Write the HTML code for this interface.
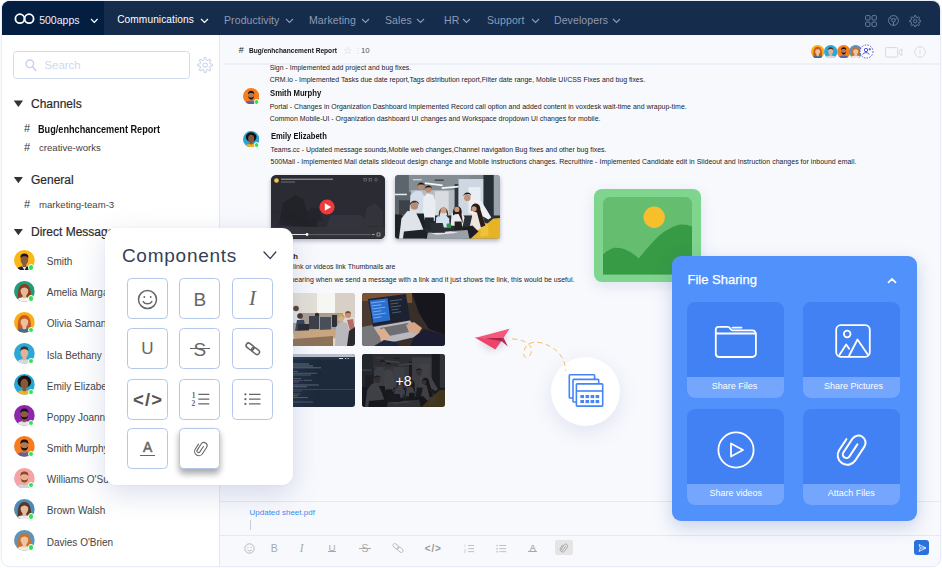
<!DOCTYPE html>
<html lang="en">
<head>
<meta charset="utf-8">
<title>500apps - Communications</title>
<style>
*{box-sizing:border-box;margin:0;padding:0}
html,body{width:942px;height:568px;overflow:hidden;background:#fff;font-family:"Liberation Sans",sans-serif;color:#333}
.abs,.abs *{position:absolute}
.win{left:2px;top:1px;width:938px;height:565px;border-radius:8px;background:#f8f9fd;overflow:hidden;box-shadow:0 0 0 1.300px #e9edf9}
.topbar{left:0;top:0;width:938px;height:34.300px;background:#152c4c}
.brand{left:0;top:0;width:102px;height:34.300px;background:#031e41}
.t{white-space:nowrap;line-height:1}
.nav{font-size:10.500px;color:#8d9bb5;top:13.900px;letter-spacing:.1px}
.nav.on{color:#fff}
.sidebar{left:0;top:34px;width:218px;height:531px;background:#fff;border-right:1px solid #e3e8f5}
.search{left:11px;top:16.300px;width:177px;height:27.500px;border:1.200px solid #d2dbee;border-radius:3.500px;background:#fff}
.sec{font-size:12px;color:#2b2b2b;left:29px;margin-top:1px;-webkit-text-stroke:.2px #2b2b2b}
.tri{left:11.700px;width:9.400px;height:6.500px;background:#333;clip-path:polygon(0 0,100% 0,50% 100%);margin-top:.400px}
.hash{font-size:11px;color:#333;left:22px}
.ch{font-size:9.6px;color:#444;left:37px}
.ch.b{font-weight:bold;color:#111;left:36px;font-size:10.300px;transform:scaleX(.888);transform-origin:0 50%;margin-top:.8px}
.av{width:20px;height:20px;border-radius:50%;left:12px;overflow:visible}
.av i{left:14px;top:14px;width:6px;height:6px;border-radius:50%;background:#2ee350;border:.5px solid #fff}
.av b{left:6.5px;top:3.5px;width:7px;height:8px;border-radius:50%}
.av u{left:3.5px;top:12px;width:13px;height:8px;border-radius:6px 6px 4px 4px}
.un{font-size:10.4px;color:#3c3c3c;left:45px}
.main{left:218px;top:34px;width:720px;height:531px;background:#f8f9fd}
.mhead{left:3px;top:0;width:717px;height:30px;border-bottom:2px solid #ebeff8}
.msg{font-size:7.3px;color:#222;left:50px}
.nm{font-size:8.6px;font-weight:bold;color:#111;left:50px}

.dot{width:6.400px;height:6.400px;border-radius:50%;background:#2ee350;border:.6px solid #fff}
.un2{font-size:10px;color:#444}
.pg{left:-2px;top:-1px;width:942px;height:568px}
.m{font-size:6.950px;color:#222;left:269.700px}
.n{font-weight:bold;color:#111;left:270px}
.thumb{border-radius:3px;overflow:hidden;box-shadow:0 2px 4px rgba(40,50,80,.35)}
.panel{background:#fff;border-radius:11px;box-shadow:0 9px 28px rgba(90,110,170,.22),0 0 3px rgba(90,110,170,.08)}
.cb{width:41px;height:41px;border:1px solid #b4c7ea;border-radius:4.5px;background:#fff}
.fs{background:#5191fb;border-radius:9px;box-shadow:0 6px 18px rgba(60,90,170,.25)}
.tile{width:97px;height:96px;border-radius:8px;background:#4281f4;overflow:hidden}
.tile .lb{left:0;top:75px;width:97px;height:21px;background:#74a6fd;color:#fff;font-size:9px;text-align:center;line-height:19.400px;white-space:nowrap}
</style>
</head>
<body>
<div class="abs win">
  <!-- TOP BAR -->
  <div class="topbar">
    <div class="brand">
      <svg style="left:12px;top:11px" width="21" height="13" viewBox="0 0 21 13"><circle cx="5.900" cy="6.700" r="4.500" fill="none" stroke="#fff" stroke-width="1.800"/><circle cx="15.100" cy="6.700" r="4.500" fill="none" stroke="#fff" stroke-width="1.800"/></svg>
      <div class="t" style="left:37.200px;top:13.900px;font-size:10.500px;color:#eef1f6">500apps</div>
      <svg style="left:87.500px;top:17px" width="9" height="6" viewBox="0 0 9 6"><path d="M1 1l3.300 3.400L7.600 1" fill="none" stroke="#fff" stroke-width="1.250"/></svg>
    </div>
    <div class="t nav on" style="left:115.200px;font-size:10.150px">Communications</div>
    <svg style="left:198px;top:16.600px" width="9" height="6" viewBox="0 0 9 6"><path d="M1 1l3.5 3.5L8 1" fill="none" stroke="#fff" stroke-width="1.2"/></svg>
    <div class="t nav" style="left:222px">Productivity</div>
    <svg style="left:283px;top:16.600px" width="9" height="6" viewBox="0 0 9 6"><path d="M1 1l3.5 3.5L8 1" fill="none" stroke="#8d9bb5" stroke-width="1.1"/></svg>
    <div class="t nav" style="left:307px">Marketing</div>
    <svg style="left:359px;top:16.600px" width="9" height="6" viewBox="0 0 9 6"><path d="M1 1l3.5 3.5L8 1" fill="none" stroke="#8d9bb5" stroke-width="1.1"/></svg>
    <div class="t nav" style="left:383px">Sales</div>
    <svg style="left:414px;top:16.600px" width="9" height="6" viewBox="0 0 9 6"><path d="M1 1l3.5 3.5L8 1" fill="none" stroke="#8d9bb5" stroke-width="1.1"/></svg>
    <div class="t nav" style="left:442px">HR</div>
    <svg style="left:460px;top:16.600px" width="9" height="6" viewBox="0 0 9 6"><path d="M1 1l3.5 3.5L8 1" fill="none" stroke="#8d9bb5" stroke-width="1.1"/></svg>
    <div class="t nav" style="left:485px">Support</div>
    <svg style="left:529px;top:16.600px" width="9" height="6" viewBox="0 0 9 6"><path d="M1 1l3.5 3.5L8 1" fill="none" stroke="#8d9bb5" stroke-width="1.1"/></svg>
    <div class="t nav" style="left:552px">Developers</div>
    <svg style="left:610px;top:16.600px" width="9" height="6" viewBox="0 0 9 6"><path d="M1 1l3.5 3.5L8 1" fill="none" stroke="#8d9bb5" stroke-width="1.1"/></svg>
    <!-- right icons -->
    <svg style="left:863px;top:14.200px" width="12" height="12" viewBox="0 0 12 12" fill="none" stroke="#7486a6" stroke-width=".9"><rect x=".6" y=".6" width="4.4" height="4.4" rx="1"/><rect x="7" y=".6" width="4.4" height="4.4" rx="1"/><rect x=".6" y="7" width="4.4" height="4.4" rx="1"/><rect x="7" y="7" width="4.4" height="4.4" rx="1"/></svg>
    <svg style="left:886px;top:14.200px" width="11" height="11" viewBox="0 0 11 11" fill="none" stroke="#7486a6" stroke-width=".9"><circle cx="5.5" cy="5.5" r="4.9"/><circle cx="5.5" cy="5.2" r="1.7"/><path d="M5.5 7v3.3M3.9 4.6L2 2.6M7.1 4.6l2-2"/></svg>
    <svg style="left:907px;top:13.700px" width="12.400" height="12.400" viewBox="0 0 24 24" fill="none" stroke="#7486a6" stroke-width="1.700" stroke-linejoin="round"><circle cx="12" cy="12" r="3.300"/><path d="M9.88 4.70 L10.88 1.06 L13.12 1.06 L14.12 4.70 L15.66 5.34 L18.94 3.47 L20.53 5.06 L18.66 8.34 L19.30 9.88 L22.94 10.88 L22.94 13.12 L19.30 14.12 L18.66 15.66 L20.53 18.94 L18.94 20.53 L15.66 18.66 L14.12 19.30 L13.12 22.94 L10.88 22.94 L9.88 19.30 L8.34 18.66 L5.06 20.53 L3.47 18.94 L5.34 15.66 L4.70 14.12 L1.06 13.12 L1.06 10.88 L4.70 9.88 L5.34 8.34 L3.47 5.06 L5.06 3.47 L8.34 5.34Z"/></svg>
  </div>

  <!-- SIDEBAR -->
  <div class="sidebar" id="sidebar">
    <div class="search">
      <svg style="left:10.500px;top:6.500px" width="12" height="13" viewBox="0 0 12 13" fill="none" stroke="#c5d3ec" stroke-width="1.400"><circle cx="4.8" cy="4.8" r="3.8"/><path d="M7.6 7.8l3.6 4.2"/></svg>
      <div class="t" style="left:30.500px;top:7.700px;font-size:11.400px;color:#cdd8ee">Search</div>
    </div>
    <svg style="left:195.300px;top:21.900px" width="16.200" height="16.200" viewBox="0 0 24 24" fill="none" stroke="#cbd4e8" stroke-width="1.600" stroke-linejoin="round"><circle cx="12" cy="12" r="3.200"/><path d="M9.88 4.70 L10.88 1.06 L13.12 1.06 L14.12 4.70 L15.66 5.34 L18.94 3.47 L20.53 5.06 L18.66 8.34 L19.30 9.88 L22.94 10.88 L22.94 13.12 L19.30 14.12 L18.66 15.66 L20.53 18.94 L18.94 20.53 L15.66 18.66 L14.12 19.30 L13.12 22.94 L10.88 22.94 L9.88 19.30 L8.34 18.66 L5.06 20.53 L3.47 18.94 L5.34 15.66 L4.70 14.12 L1.06 13.12 L1.06 10.88 L4.70 9.88 L5.34 8.34 L3.47 5.06 L5.06 3.47 L8.34 5.34Z"/></svg>
    <div class="tri" style="top:65px"></div><div class="t sec" style="top:61.5px">Channels</div>
    <div class="t hash" style="top:88px">#</div><div class="t ch b" style="top:89.5px">Bug/enhchancement Report</div>
    <div class="t hash" style="top:107px">#</div><div class="t ch" style="top:108px">creative-works</div>
    <div class="tri" style="top:141.300px"></div><div class="t sec" style="top:137.800px">General</div>
    <div class="t hash" style="top:164.400px">#</div><div class="t ch" style="top:164.5px">marketing-team-3</div>
    <div class="tri" style="top:193.400px"></div><div class="t sec" style="top:189.900px">Direct Messages</div>
  </div>

  <!-- MAIN -->
  <div class="main" id="main">
    <div class="mhead" id="mhead"></div>
  </div>

  <div class="pg" id="pg">
    <!-- sidebar users (page coords) -->
    <svg width="20.8" height="20.8" viewBox="0 0 20 20" style="left:13.800px;top:249.7px"><clipPath id="cs0"><circle cx="10" cy="10" r="10"/></clipPath><g clip-path="url(#cs0)"><rect width="20" height="20" fill="#fbb716"/><path d="M1.500 22c.3-4.500 3.200-6.300 8.500-6.300s8.200 1.800 8.500 6.300z" fill="#1b2236"/><path d="M7.800 15.700l2.200 3.800 2.200-3.800z" fill="#f4f4f4"/><rect x="8.200" y="12.500" width="3.600" height="4.200" rx="1.300" fill="#8a5a3c"/><ellipse cx="10" cy="9.300" rx="3.700" ry="4.700" fill="#8a5a3c"/><path d="M6.200 8C5.800 4.600 7.600 3.300 10 3.300s4.200 1.300 3.800 4.700C13.100 6.500 11.700 6 10 6s-3.100.5-3.800 2z" fill="#1e1512"/></g></svg><div class="dot" style="left:28px;top:264.3px"></div><div class="t un2" style="left:46.800px;top:257.1px">Smith</div>
    <svg width="20.8" height="20.8" viewBox="0 0 20 20" style="left:13.800px;top:280.8px"><clipPath id="cs1"><circle cx="10" cy="10" r="10"/></clipPath><g clip-path="url(#cs1)"><rect width="20" height="20" fill="#1f9b7d"/><path d="M3.800 19.500C3 12 3.600 2.800 10 2.800s7 9.200 6.200 16.700z" fill="#8a3f22"/><path d="M1.500 22c.3-4.500 3.200-6.300 8.500-6.300s8.200 1.800 8.500 6.300z" fill="#f3f3f3"/><rect x="8.200" y="12.500" width="3.600" height="4.200" rx="1.300" fill="#e7b99a"/><ellipse cx="10" cy="9.300" rx="3.700" ry="4.700" fill="#e7b99a"/><path d="M5.900 9C5.600 5 7.300 3.400 10 3.400s4.400 1.600 4.100 5.600C13.100 7 11.600 6.200 10 6.200S6.900 7 5.900 9z" fill="#8a3f22"/></g></svg><div class="dot" style="left:28px;top:295.4px"></div><div class="t un2" style="left:46.800px;top:288.2px">Amelia Margaret</div>
    <svg width="20.8" height="20.8" viewBox="0 0 20 20" style="left:13.800px;top:311.9px"><clipPath id="cs2"><circle cx="10" cy="10" r="10"/></clipPath><g clip-path="url(#cs2)"><rect width="20" height="20" fill="#f9ae17"/><path d="M3.800 19.500C3 12 3.600 2.800 10 2.800s7 9.200 6.200 16.700z" fill="#c85a24"/><path d="M1.500 22c.3-4.500 3.200-6.300 8.500-6.300s8.200 1.800 8.500 6.300z" fill="#3f6f8f"/><rect x="8.200" y="12.500" width="3.600" height="4.200" rx="1.300" fill="#edc0a2"/><ellipse cx="10" cy="9.300" rx="3.700" ry="4.700" fill="#edc0a2"/><path d="M5.900 9C5.600 5 7.300 3.400 10 3.400s4.400 1.600 4.100 5.600C13.100 7 11.600 6.200 10 6.200S6.900 7 5.900 9z" fill="#c85a24"/></g></svg><div class="dot" style="left:28px;top:326.5px"></div><div class="t un2" style="left:46.800px;top:319.3px">Olivia Samantha</div>
    <svg width="20.8" height="20.8" viewBox="0 0 20 20" style="left:13.800px;top:343.1px"><clipPath id="cs3"><circle cx="10" cy="10" r="10"/></clipPath><g clip-path="url(#cs3)"><rect width="20" height="20" fill="#2ba8d6"/><path d="M1.500 22c.3-4.500 3.200-6.300 8.500-6.300s8.200 1.800 8.500 6.300z" fill="#d9d9dc"/><rect x="8.200" y="12.500" width="3.600" height="4.200" rx="1.300" fill="#e2b294"/><ellipse cx="10" cy="9.300" rx="3.700" ry="4.700" fill="#e2b294"/><path d="M6.200 8C5.800 4.600 7.600 3.300 10 3.300s4.200 1.300 3.800 4.700C13.100 6.500 11.700 6 10 6s-3.100.5-3.800 2z" fill="#4a3024"/></g></svg><div class="dot" style="left:28px;top:357.7px"></div><div class="t un2" style="left:46.800px;top:350.5px">Isla Bethany</div>
    <svg width="20.8" height="20.8" viewBox="0 0 20 20" style="left:13.800px;top:374.2px"><clipPath id="cs4"><circle cx="10" cy="10" r="10"/></clipPath><g clip-path="url(#cs4)"><rect width="20" height="20" fill="#26a6d8"/><ellipse cx="10" cy="7.400" rx="6.600" ry="5.900" fill="#17110f"/><path d="M1.500 22c.3-4.500 3.200-6.300 8.500-6.300s8.200 1.800 8.500 6.300z" fill="#f0b020"/><rect x="8.200" y="12.500" width="3.600" height="4.200" rx="1.300" fill="#8a5638"/><ellipse cx="10" cy="9.300" rx="3.700" ry="4.700" fill="#8a5638"/></g></svg><div class="dot" style="left:28px;top:388.8px"></div><div class="t un2" style="left:46.800px;top:381.6px">Emily Elizabeth</div>
    <svg width="20.8" height="20.8" viewBox="0 0 20 20" style="left:13.800px;top:405.3px"><clipPath id="cs5"><circle cx="10" cy="10" r="10"/></clipPath><g clip-path="url(#cs5)"><rect width="20" height="20" fill="#8e27ad"/><path d="M1.500 22c.3-4.500 3.200-6.300 8.500-6.300s8.200 1.800 8.500 6.300z" fill="#e4e4e8"/><rect x="8.200" y="12.500" width="3.600" height="4.200" rx="1.300" fill="#8c5c40"/><ellipse cx="10" cy="9.300" rx="3.700" ry="4.700" fill="#8c5c40"/><path d="M6.300 9.400c.2 6.200 7.200 6.200 7.400 0-.7 1.800-1.800 2.300-3.700 2.300s-3-.5-3.700-2.300z" fill="#1f1613"/><path d="M6.200 8C5.800 4.600 7.600 3.300 10 3.300s4.200 1.300 3.800 4.700C13.100 6.500 11.700 6 10 6s-3.100.5-3.800 2z" fill="#1f1613"/></g></svg><div class="dot" style="left:28px;top:419.9px"></div><div class="t un2" style="left:46.800px;top:412.7px">Poppy Joanne</div>
    <svg width="20.8" height="20.8" viewBox="0 0 20 20" style="left:13.800px;top:436.4px"><clipPath id="cs6"><circle cx="10" cy="10" r="10"/></clipPath><g clip-path="url(#cs6)"><rect width="20" height="20" fill="#f57c1f"/><path d="M1.500 22c.3-4.500 3.200-6.300 8.500-6.300s8.200 1.800 8.500 6.300z" fill="#5d639c"/><rect x="8.200" y="12.500" width="3.600" height="4.200" rx="1.300" fill="#b07a58"/><ellipse cx="10" cy="9.300" rx="3.700" ry="4.700" fill="#b07a58"/><path d="M6.300 9.400c.2 6.200 7.200 6.200 7.400 0-.7 1.800-1.800 2.300-3.700 2.300s-3-.5-3.700-2.300z" fill="#20140f"/><path d="M6.200 8C5.800 4.600 7.600 3.300 10 3.300s4.200 1.300 3.800 4.700C13.100 6.500 11.700 6 10 6s-3.100.5-3.800 2z" fill="#20140f"/></g></svg><div class="dot" style="left:28px;top:451.0px"></div><div class="t un2" style="left:46.800px;top:443.8px">Smith Murphy</div>
    <svg width="20.8" height="20.8" viewBox="0 0 20 20" style="left:13.800px;top:467.5px"><clipPath id="cs7"><circle cx="10" cy="10" r="10"/></clipPath><g clip-path="url(#cs7)"><rect width="20" height="20" fill="#f3a5a5"/><path d="M1.500 22c.3-4.500 3.200-6.300 8.500-6.300s8.200 1.800 8.500 6.300z" fill="#c9d6ea"/><rect x="8.200" y="12.500" width="3.600" height="4.200" rx="1.300" fill="#e4b090"/><ellipse cx="10" cy="9.300" rx="3.700" ry="4.700" fill="#e4b090"/><path d="M6.300 9.400c.2 6.200 7.200 6.200 7.400 0-.7 1.800-1.800 2.300-3.700 2.300s-3-.5-3.700-2.300z" fill="#8a4a26"/><path d="M6.200 8C5.800 4.600 7.600 3.300 10 3.300s4.200 1.300 3.800 4.700C13.100 6.500 11.700 6 10 6s-3.100.5-3.800 2z" fill="#8a4a26"/></g></svg><div class="dot" style="left:28px;top:482.1px"></div><div class="t un2" style="left:46.800px;top:474.9px">Williams O'Sullivan</div>
    <svg width="20.8" height="20.8" viewBox="0 0 20 20" style="left:13.800px;top:498.7px"><clipPath id="cs8"><circle cx="10" cy="10" r="10"/></clipPath><g clip-path="url(#cs8)"><rect width="20" height="20" fill="#4e8cb8"/><path d="M3.800 19.500C3 12 3.600 2.800 10 2.800s7 9.200 6.200 16.700z" fill="#5a3626"/><path d="M1.500 22c.3-4.500 3.200-6.300 8.500-6.300s8.200 1.800 8.500 6.300z" fill="#ececec"/><rect x="8.200" y="12.500" width="3.600" height="4.200" rx="1.300" fill="#e6b99c"/><ellipse cx="10" cy="9.300" rx="3.700" ry="4.700" fill="#e6b99c"/><path d="M5.900 9C5.600 5 7.300 3.400 10 3.400s4.400 1.600 4.100 5.600C13.100 7 11.600 6.200 10 6.200S6.900 7 5.900 9z" fill="#5a3626"/></g></svg><div class="dot" style="left:28px;top:513.3px"></div><div class="t un2" style="left:46.800px;top:506.1px">Brown Walsh</div>
    <svg width="20.8" height="20.8" viewBox="0 0 20 20" style="left:13.800px;top:529.8px"><clipPath id="cs9"><circle cx="10" cy="10" r="10"/></clipPath><g clip-path="url(#cs9)"><rect width="20" height="20" fill="#5b94bc"/><path d="M3.800 19.500C3 12 3.600 2.800 10 2.800s7 9.200 6.200 16.700z" fill="#c9722e"/><path d="M1.500 22c.3-4.500 3.200-6.300 8.500-6.300s8.200 1.800 8.500 6.300z" fill="#f3e8dc"/><rect x="8.200" y="12.500" width="3.600" height="4.200" rx="1.300" fill="#eec4a6"/><ellipse cx="10" cy="9.300" rx="3.700" ry="4.700" fill="#eec4a6"/><path d="M5.900 9C5.600 5 7.300 3.400 10 3.400s4.400 1.600 4.100 5.600C13.100 7 11.600 6.200 10 6.200S6.900 7 5.900 9z" fill="#c9722e"/></g></svg><div class="dot" style="left:28px;top:544.4px"></div><div class="t un2" style="left:46.800px;top:537.9px">Davies O'Brien</div>
    <!-- channel header -->
    <div class="t" style="left:238.700px;top:46.300px;font-size:9px;color:#222">#</div>
    <div class="t" style="left:249.300px;top:47.100px;font-size:7.400px;font-weight:bold;color:#111;transform:scaleX(.892);transform-origin:0 50%">Bug/enhchancement Report</div>
    <div class="t" style="left:343px;top:45.700px;font-size:9.500px;color:#cdd1da">&#9734;</div>
    <div class="t" style="left:354px;top:46.500px;font-size:8px;color:#d3d7df">&#8942;</div>
    <div class="t" style="left:361px;top:47px;font-size:7.800px;color:#555">10</div>

    <svg width="13.4" height="13.4" viewBox="0 0 20 20" style="left:811.1px;top:45.100px"><clipPath id="ch0"><circle cx="10" cy="10" r="10"/></clipPath><g clip-path="url(#ch0)"><rect width="20" height="20" fill="#f9ae17"/><path d="M3.800 19.500C3 12 3.600 2.800 10 2.800s7 9.200 6.200 16.700z" fill="#c85a24"/><path d="M1.500 22c.3-4.500 3.200-6.300 8.500-6.300s8.200 1.800 8.500 6.300z" fill="#3f6f8f"/><rect x="8.200" y="12.500" width="3.600" height="4.200" rx="1.300" fill="#edc0a2"/><ellipse cx="10" cy="9.300" rx="3.700" ry="4.700" fill="#edc0a2"/><path d="M5.900 9C5.600 5 7.300 3.400 10 3.400s4.400 1.600 4.100 5.600C13.100 7 11.600 6.200 10 6.200S6.900 7 5.900 9z" fill="#c85a24"/></g></svg>
    <svg width="13.4" height="13.4" viewBox="0 0 20 20" style="left:824.1px;top:45.100px"><clipPath id="ch1"><circle cx="10" cy="10" r="10"/></clipPath><g clip-path="url(#ch1)"><rect width="20" height="20" fill="#2ba8d6"/><path d="M1.500 22c.3-4.500 3.200-6.300 8.500-6.300s8.200 1.800 8.500 6.300z" fill="#d9d9dc"/><rect x="8.200" y="12.500" width="3.600" height="4.200" rx="1.300" fill="#e2b294"/><ellipse cx="10" cy="9.300" rx="3.700" ry="4.700" fill="#e2b294"/><path d="M6.200 8C5.800 4.600 7.600 3.300 10 3.300s4.200 1.300 3.800 4.700C13.100 6.500 11.700 6 10 6s-3.100.5-3.800 2z" fill="#4a3024"/></g></svg>
    <svg width="13.4" height="13.4" viewBox="0 0 20 20" style="left:836.9px;top:45.100px"><clipPath id="ch2"><circle cx="10" cy="10" r="10"/></clipPath><g clip-path="url(#ch2)"><rect width="20" height="20" fill="#f57c1f"/><path d="M1.500 22c.3-4.500 3.200-6.300 8.500-6.300s8.200 1.800 8.500 6.300z" fill="#5d639c"/><rect x="8.200" y="12.500" width="3.600" height="4.200" rx="1.300" fill="#b07a58"/><ellipse cx="10" cy="9.300" rx="3.700" ry="4.700" fill="#b07a58"/><path d="M6.300 9.400c.2 6.200 7.200 6.200 7.400 0-.7 1.800-1.800 2.300-3.700 2.300s-3-.5-3.700-2.300z" fill="#20140f"/><path d="M6.200 8C5.800 4.600 7.600 3.300 10 3.300s4.200 1.300 3.800 4.700C13.100 6.500 11.700 6 10 6s-3.100.5-3.800 2z" fill="#20140f"/></g></svg>
    <svg width="13.4" height="13.4" viewBox="0 0 20 20" style="left:849.0px;top:45.100px"><clipPath id="ch3"><circle cx="10" cy="10" r="10"/></clipPath><g clip-path="url(#ch3)"><rect width="20" height="20" fill="#5b94bc"/><path d="M3.800 19.500C3 12 3.600 2.800 10 2.800s7 9.200 6.200 16.700z" fill="#c9722e"/><path d="M1.500 22c.3-4.500 3.200-6.300 8.500-6.300s8.200 1.800 8.500 6.300z" fill="#f3e8dc"/><rect x="8.200" y="12.500" width="3.600" height="4.200" rx="1.300" fill="#eec4a6"/><ellipse cx="10" cy="9.300" rx="3.700" ry="4.700" fill="#eec4a6"/><path d="M5.900 9C5.600 5 7.300 3.400 10 3.400s4.400 1.600 4.100 5.600C13.100 7 11.600 6.200 10 6.200S6.900 7 5.900 9z" fill="#c9722e"/></g></svg>
    <svg width="15" height="15" viewBox="0 0 15 15" style="left:859.400px;top:44.300px" fill="#fff" stroke="#3d3fd8"><circle cx="7.500" cy="7.500" r="6.500" stroke-width=".9" stroke-dasharray="1.500 1.300"/><circle cx="7" cy="6" r="1.700" fill="none" stroke-width=".9"/><path d="M3.800 10.600c.4-2.600 6-2.600 6.400 0" fill="none" stroke-width=".9"/><path d="M9.600 5.200h2.400M10.800 4v2.400" stroke-width=".8"/></svg>
    <svg width="18" height="11" viewBox="0 0 18 11" style="left:884.500px;top:46.500px" fill="none" stroke="#d6d9e1" stroke-width="1"><rect x=".6" y=".6" width="12" height="9.400" rx="1"/><path d="M14.300 3.600l2.600-1.600v6.600l-2.600-1.600z"/></svg>
    <svg width="12" height="12" viewBox="0 0 12 12" style="left:914px;top:45.800px" fill="none" stroke="#d6d9e1" stroke-width=".9"><circle cx="6" cy="6" r="5.300"/><path d="M6 5.300v3.300M6 3.300v.9"/></svg>
    <svg width="16.3" height="16.3" viewBox="0 0 20 20" style="left:242.500px;top:88px"><clipPath id="cm1"><circle cx="10" cy="10" r="10"/></clipPath><g clip-path="url(#cm1)"><rect width="20" height="20" fill="#f57c1f"/><path d="M1.500 22c.3-4.500 3.200-6.300 8.500-6.300s8.200 1.800 8.500 6.300z" fill="#5d639c"/><rect x="8.200" y="12.500" width="3.600" height="4.200" rx="1.300" fill="#b07a58"/><ellipse cx="10" cy="9.300" rx="3.700" ry="4.700" fill="#b07a58"/><path d="M6.300 9.400c.2 6.200 7.200 6.200 7.400 0-.7 1.800-1.800 2.300-3.700 2.300s-3-.5-3.700-2.300z" fill="#20140f"/><path d="M6.200 8C5.800 4.600 7.600 3.300 10 3.300s4.200 1.300 3.800 4.700C13.100 6.500 11.700 6 10 6s-3.100.5-3.800 2z" fill="#20140f"/></g></svg><div class="dot" style="left:253.500px;top:99.300px;width:5.500px;height:5.500px"></div>
    <svg width="16.3" height="16.3" viewBox="0 0 20 20" style="left:242.500px;top:131px"><clipPath id="cm2"><circle cx="10" cy="10" r="10"/></clipPath><g clip-path="url(#cm2)"><rect width="20" height="20" fill="#26a6d8"/><ellipse cx="10" cy="7.400" rx="6.600" ry="5.900" fill="#17110f"/><path d="M1.500 22c.3-4.500 3.200-6.300 8.500-6.300s8.200 1.800 8.500 6.300z" fill="#f0b020"/><rect x="8.200" y="12.500" width="3.600" height="4.200" rx="1.300" fill="#8a5638"/><ellipse cx="10" cy="9.300" rx="3.700" ry="4.700" fill="#8a5638"/></g></svg><div class="dot" style="left:253.500px;top:142.300px;width:5.500px;height:5.500px"></div>
    <!-- messages -->
    <div class="t m" style="top:64.5px">Sign - Implemented add project and bug fixes.</div>
    <div class="t m" style="top:76.700px">CRM.io - Implemented Tasks due date report,Tags distribution report,Filter date range, Mobile UI/CSS Fixes and bug fixes.</div>
    <div class="t n" style="top:89.300px;left:269.700px;font-size:8.600px;transform:scaleX(.895);transform-origin:0 50%">Smith Murphy</div>
    <div class="t m" style="top:104.300px;letter-spacing:.0131px">Portal - Changes in Organization Dashboard Implemented Record call option and added content in voxdesk wait-time and wrapup-time.</div>
    <div class="t m" style="top:116.300px">Common Mobile-UI - Organization dashboard UI changes and Workspace dropdown UI changes for mobile.</div>
    <div class="t n" style="top:132.400px;left:271px;font-size:8.500px;transform:scaleX(.895);transform-origin:0 50%">Emily Elizabeth</div>
    <div class="t m" style="top:147.300px;left:270.500px">Teams.cc - Updated message sounds,Mobile web changes,Channel navigation Bug fixes and other bug fixes.</div>
    <div class="t m" style="top:159.300px;left:270.500px;letter-spacing:.0405px">500Mail - Implemented Mail details slideout design change and Mobile instructions changes. Recruithire - Implemented Candidate edit in Slideout and Instruction changes for inbound email.</div>

    <div class="t n" style="top:253px;left:276.500px;font-size:7.7px">Smith</div>
    <div class="t m" style="top:264.200px;left:271.800px" id="l1">Image link or videos link Thumbnails are</div>
    <div class="t m" style="top:276.700px;left:271px;letter-spacing:.0274px" id="l2">not appearing when we send a message with a link and it just shows the link, this would be useful.</div>


    <!-- shared photo artwork -->
    <svg width="0" height="0" style="left:0;top:0">
      <defs>
        <filter id="bl" x="-10%" y="-10%" width="120%" height="120%"><feGaussianBlur stdDeviation=".45"/></filter>
        <symbol id="office" viewBox="0 0 106 63" preserveAspectRatio="none">
          <rect width="106" height="63" fill="#7f878e"/>
          <g filter="url(#bl)">
          <rect x="0" y="0" width="18" height="40" fill="#5d656c"/>
          <rect x="14" y="0" width="62" height="17" fill="#858d94"/>
          <rect x="16" y="15" width="58" height="30" fill="#b4bbc3"/>
          <rect x="40" y="16" width="14" height="26" fill="#d9dde2"/>
          <rect x="60" y="9" width="4" height="32" fill="#2e353c"/>
          <rect x="30" y="8.300" width="18" height="1.700" fill="#f4f6f8" transform="rotate(7 39 9)"/>
          <rect x="47" y="11.500" width="17" height="1.700" fill="#f4f6f8" transform="rotate(-5 55 12)"/>
          <rect x="0" y="18.500" width="12" height="1.500" fill="#e8ecef"/>
          <rect x="18" y="4" width="9" height="1.300" fill="#cfd4d8"/>
          <rect x="40" y="4.500" width="9" height="1.200" fill="#30363c"/>
          <rect x="64" y="4" width="26" height="38" fill="#cfd8e2"/>
          <rect x="74" y="12" width="12" height="26" fill="#e9eef4"/>
          <rect x="89" y="0" width="10.500" height="44" fill="#272e36"/>
          <rect x="99.500" y="0" width="6.500" height="46" fill="#9aa2ab"/>
          <rect x="4" y="25" width="12" height="14" fill="#3c4249"/>
          <rect x="0" y="40" width="106" height="23" fill="#2a2f36"/>
          <rect x="0" y="39" width="7" height="24" fill="#1d2126"/>
          <!-- sofa -->
          <path d="M73 62l2-8 10-8 8 2 6-5 7-.5V63H74z" fill="#e6b325"/>
          <path d="M86 50l8-2v12l-8 1z" fill="#efc23a"/>
          <!-- standing men -->
          <path d="M14.500 40l1-20 5-4.500 6 .5 3.500 6-.5 20z" fill="#d3deea"/>
          <circle cx="26.300" cy="11.600" r="3.100" fill="#b98a70"/><path d="M22.600 11c-.3-4.600 7.400-5 7.200 0l-1.200-1.700-4.800.2z" fill="#231a17"/>
          <path d="M28 44l.5-22 4-4 6 1.500 2.500 8-1 18z" fill="#e9ecf1"/>
          <circle cx="33.700" cy="14.500" r="3" fill="#bd8e74"/><path d="M30.200 13.600c0-4.200 7-4.600 6.800 0l-1.200-1.500-4.400.2z" fill="#1f1714"/>
          <path d="M19 38h10l2 16H20z" fill="#1e222b"/><path d="M30 42h9v12h-9z" fill="#22262e"/>
          <!-- sitting man left -->
          <path d="M4 63l2.500-20 6-7.500 8 .5 4 8 4 10 1 9z" fill="#dfe3ea"/>
          <circle cx="19.500" cy="30.500" r="3.800" fill="#b88a72"/><path d="M15 30c-.5-6 9.500-6 9-.5l-2-2.500-5 .5z" fill="#3a2a22"/>
          <path d="M9 56l20-2 5 4v5H8z" fill="#1d2128"/>
          <!-- centre women -->
          <path d="M41 52l.5-10 4-3h5l4 4 .5 9z" fill="#d5e3f1"/>
          <path d="M44.300 42c-2.300-13 11.300-13 9 0l-1.800-6-5.300-.3z" fill="#50321f"/><circle cx="48.800" cy="35" r="2.900" fill="#cfa086"/>
          <path d="M56 50l1-12 4-3 6 1 3 6-2 9z" fill="#e9ebf0"/>
          <path d="M58.500 40c-2-12 10.500-12 8.500-1l1.500 9-4.500-9.500-3.500.2z" fill="#2a1c18"/><circle cx="62.300" cy="34" r="2.600" fill="#c99a80"/>
          <path d="M60 46h7l1 9h-8z" fill="#23201f"/>
          <!-- right man leaning -->
          <path d="M74 27l5-3.500 8 2.500 10 16-3 2-9-5-7 2z" fill="#eef0f4"/>
          <circle cx="72.800" cy="22.500" r="3.300" fill="#c29278"/><path d="M68.800 21c0-5 8-5 7.800-.5l-2-1.700-4.500.5z" fill="#211613"/>
          <!-- right woman -->
          <path d="M75 52l3-13 5-3 5 4 3 10-10 6z" fill="#ebe6e0"/>
          <path d="M76.500 35c-1-9 9.500-9 9.500-1l5 16-4.500 2-4-15z" fill="#2b1b17"/><circle cx="79.500" cy="33.500" r="2.700" fill="#c99a80"/>
          <path d="M68 52l10-2 6 6-8 7H69z" fill="#1c1d22"/>
          <!-- table + laptop -->
          <path d="M33 57l40-2.500 2 8.500H32z" fill="#9ba0a8"/>
          <path d="M36 57.500l20-1.500 8 1-22 2z" fill="#e4e6ea"/>
          <path d="M35 47.500h13l2.500 9.500H37z" fill="#2b2e35"/>
          <rect x="52" y="48" width="4.500" height="4.500" rx="1" fill="#2f8f46"/>
          </g>
        </symbol>
      </defs>
    </svg>

    <!-- video thumb -->
    <div class="thumb" style="left:271px;top:175px;width:114px;height:63.700px;background:#2b2b33;border-radius:5.500px">
      <svg width="114" height="64" viewBox="0 0 114 64" style="left:0;top:0">
        <rect width="114" height="64" fill="#2b2b33"/>
        <g filter="url(#bl)" opacity=".55">
          <path d="M8 50l4-22 12-8 8 4 4 12 10 4v12z" fill="#1b1b20"/>
          <path d="M34 44l6-12 8 2 4 12z" fill="#1f2026"/>
          <path d="M60 40h30l10 14H54z" fill="#3b3c44"/>
          <path d="M92 50l4-18 8-4 8 8v16z" fill="#3a3b42"/>
          <rect x="0" y="52" width="114" height="11" fill="#3a3b41"/>
        </g>
        <circle cx="5.5" cy="5.500" r="2.300" fill="#f3c64b"/>
        <rect x="10" y="3.600" width="52" height="1.300" fill="#c9c9cc" opacity=".6"/>
        <rect x="10" y="6.500" width="14" height="1" fill="#8d8d92" opacity=".7"/>
        <rect x="93" y="3.500" width="2.500" height="2.500" fill="none" stroke="#8c8c92" stroke-width=".5"/><rect x="98" y="3.500" width="2.500" height="2.500" fill="none" stroke="#8c8c92" stroke-width=".5"/><circle cx="105" cy="4.800" r="1.300" fill="none" stroke="#8c8c92" stroke-width=".5"/>
        <circle cx="56" cy="32" r="7.600" fill="#ef3a3c"/><path d="M53.800 28.200l6.400 3.800-6.400 3.800z" fill="#fff"/>
        <rect x="6" y="59.100" width="94" height=".8" fill="#6a6a70"/><rect x="6" y="59" width="30" height="1" fill="#e6e6e8"/><circle cx="36" cy="59.500" r="1.400" fill="#fff"/>
        <rect x="101" y="59" width="2.500" height="1" fill="#aaa"/><rect x="106" y="58" width="3" height="3" fill="none" stroke="#c8c8cc" stroke-width=".6"/>
      </svg>
    </div>
    <!-- photo -->
    <div class="thumb" style="left:395px;top:175px;width:105.300px;height:63.700px;border-radius:3.500px"><svg width="106" height="64" style="left:0;top:0"><use href="#office" width="105.300" height="63.700"/></svg></div>

    <!-- grid of 4 -->
    <div class="thumb" style="left:271px;top:293px;width:84px;height:53px;box-shadow:none">
      <svg width="84" height="53" viewBox="0 0 84 53" style="left:0;top:0">
        <rect width="84" height="53" fill="#ddd8cf"/>
        <g filter="url(#bl)">
        <rect x="0" y="0" width="84" height="22" fill="#e4dfd6"/>
        <rect x="46" y="0" width="18" height="20" fill="#f6f6f2"/>
        <rect x="64" y="0" width="20" height="24" fill="#d8d0c6"/>
        <rect x="22" y="20" width="50" height="20" fill="#a79d92"/>
        <circle cx="25" cy="15.500" r="2.800" fill="#5a3f33"/><path d="M21 30l1-10 6-1 2 11z" fill="#dfe3ea"/>
        <circle cx="29" cy="23" r="2.800" fill="#4a342b"/><path d="M24 38l2-11 7 0 2 11z" fill="#34425c"/>
        <rect x="27" y="31" width="11" height="8" fill="#2b2b30"/>
        <circle cx="46" cy="22" r="2.200" fill="#3a2a24"/>
        <rect x="38" y="23" width="10" height="13" fill="#3a3f48"/><rect x="49" y="24" width="11" height="14" fill="#4a5058"/><rect x="61" y="22" width="5" height="12" fill="#2d3138"/>
        <path d="M22 38l48-2 4 8-50 6z" fill="#c9a680"/>
        <path d="M22 46l40-3v10H22z" fill="#8d7258"/>
        <path d="M64 53l1-19 5-6 6 2 3 10v13z" fill="#b9b9bd"/>
        <circle cx="70" cy="25" r="3.200" fill="#d9b08c"/><path d="M66.500 27c-1-8 8-8 7-1l-2-2.500-3 0z" fill="#c8a060"/>
        <circle cx="77" cy="22" r="3" fill="#c58f74"/><path d="M74 21c0-4 6-4 6 0l-1.500-1-3.500.2z" fill="#7a4a2a"/><path d="M76 27l6-1 2 12-5 0z" fill="#b56a6a"/>
        <path d="M78 38l6-4v19h-8z" fill="#2a2a2e"/>
        </g>
      </svg>
    </div>
    <div class="thumb" style="left:362px;top:293px;width:83px;height:53px;box-shadow:none">
      <svg width="83" height="53" viewBox="0 0 83 53" style="left:0;top:0">
        <rect width="83" height="53" fill="#3a2e2a"/>
        <g filter="url(#bl)">
        <rect x="0" y="0" width="50" height="10" fill="#7a5236"/>
        <rect x="0" y="8" width="12" height="30" fill="#4a3a32"/>
        <path d="M50 0h33v42l-16-6-10-16z" fill="#14141b"/>
        <path d="M6 6l38-5 4 26-37 6z" fill="#1a2230"/>
        <path d="M7.500 7.500l18-2.300 2.800 22-17 2.800z" fill="#2c6fd0"/>
        <path d="M9 10l14-1.800M9.500 13l10-1.300M10 16l13-1.800M10.500 19l9-1.300M11 22l13-2M11.500 25l8-1.300" stroke="#9cc4ff" stroke-width=".7"/>
        <path d="M28 8l12-1.500M28.500 11l8-1M29 14l10-1.300M29.500 17l7-1M30 20l9-1.300" stroke="#6f8a9a" stroke-width=".6"/>
        <path d="M11 34l37-6.500 12 15-40 9z" fill="#b9b9bd"/>
        <path d="M18 35l28-5 6 8-30 6z" fill="#6e6e74"/>
        <path d="M14 38l8-3 6 8-4 8-10-2z" fill="#dcae90"/>
        <path d="M44 32l8-3 8 6-4 6-9-2z" fill="#d6a688"/>
        <path d="M0 34l10-2 8 12 2 9H0z" fill="#77777c"/>
        <path d="M12 53l10-6 12 2 4 4z" fill="#1e2740"/>
        <path d="M52 44l10-8 21 6v11H48z" fill="#1a1f33"/>
        </g>
      </svg>
    </div>
    <div class="thumb" style="left:271px;top:354px;width:84px;height:53px;box-shadow:none">
      <svg width="84" height="53" viewBox="0 0 84 53" style="left:0;top:0">
        <rect width="84" height="53" fill="#1c2a3b"/>
        <rect width="84" height="3.200" fill="#b9c0cb"/>
        <rect y="3.200" width="84" height="2.500" fill="#25364a"/>
        <rect x="68" y="4" width="4" height=".9" fill="#dfe5ee"/><rect x="74" y="4" width="1.200" height=".9" fill="#dfe5ee"/><rect x="76.500" y="4" width="1.200" height=".9" fill="#dfe5ee"/>
        <rect y="35" width="84" height=".7" fill="#3a566e"/>
        <g stroke-width=".6" fill="none" opacity=".6">
          <path d="M22 10h16M22 12h20" stroke="#dfe5ee"/><path d="M22 13.800h28" stroke="#c9d2dd"/>
          <path d="M22 17.500h5" stroke="#5ed06a"/><path d="M22 19.300h24M22 21h18" stroke="#9fb0c2"/>
          <path d="M22 24.500h8" stroke="#5ed06a"/><path d="M22 26.300h10" stroke="#c86ad0"/><path d="M33 26.300h8" stroke="#9fb0c2"/>
          <path d="M22 28h6" stroke="#9fb0c2"/><path d="M22 31h26M22 32.800h14" stroke="#c9d2dd"/>
          <path d="M22 37h9" stroke="#d05a8a"/><path d="M22 40h7" stroke="#5ed06a"/><path d="M22 41.800h5" stroke="#e0c040"/><path d="M22 43.600h15" stroke="#e0c040"/>
          <path d="M22 48h20" stroke="#9fb0c2"/>
        </g>
      </svg>
    </div>
    <div class="thumb" style="left:362px;top:354px;width:83px;height:53px;box-shadow:none">
      <svg width="83" height="53" style="left:0;top:0"><use href="#office" width="83" height="53"/><rect width="83" height="53" fill="#15161b" opacity=".8"/></svg>
      <div class="t" style="left:0;top:19.500px;width:83px;text-align:center;font-size:14px;color:#fff">+8</div>
    </div>


    <!-- green picture icon -->
    <div style="left:594px;top:189px;width:107px;height:93px;border-radius:8px;background:#7fd58d;box-shadow:0 4px 14px rgba(90,120,170,.16)">
      <svg width="107" height="93" viewBox="0 0 107 93" style="left:0;top:0">
        <path d="M9 85.400V14.500a6.500 6.500 0 0 1 6.500-6.500h76a6.500 6.500 0 0 1 6.500 6.500v70.900z" fill="#65bd70"/>
        <circle cx="60.200" cy="28.200" r="10.700" fill="#f8bf2c"/>
        <path d="M9 65.600C14 61 18 58.800 22 58.800c8 0 16 4.200 22.700 10.700C50 63 55 57 58.800 53 65 46 70 42.500 74.300 40.400 80 37 84 35.600 87.900 35.600c4.100 0 7.100.9 10.100 1.900V85.400H9z" fill="#369b44"/>
      </svg>
    </div>

    <!-- calendar circle -->
    <div style="left:551px;top:356.500px;width:69px;height:69px;border-radius:50%;background:#fff;box-shadow:0 6px 20px rgba(90,115,180,.15)">
      <svg width="42" height="40" viewBox="0 0 42 40" style="left:14px;top:14.500px" fill="#fff" stroke="#4585f5" stroke-width="1.600" stroke-linejoin="round">
        <rect x="4.300" y="3.700" width="25.300" height="23.300" rx=".8"/>
        <rect x="8" y="8.400" width="25.700" height="22.600" rx=".8"/>
        <rect x="11.400" y="12.900" width="26.300" height="22.200" rx=".8"/>
        <path d="M11.400 20h26.300" fill="none"/>
        <g fill="#4585f5" stroke="none">
          <rect x="15.400" y="24" width="3.600" height="3.100"/><rect x="20.500" y="24" width="3.600" height="3.100"/><rect x="25.600" y="24" width="3.600" height="3.100"/><rect x="30.600" y="24" width="3.600" height="3.100"/>
          <rect x="15.400" y="29" width="3.600" height="3.100"/><rect x="20.500" y="29" width="3.600" height="3.100"/><rect x="25.600" y="29" width="3.600" height="3.100"/><rect x="30.600" y="29" width="3.600" height="3.100"/>
        </g>
      </svg>
    </div>

    <!-- paper plane + dashed trail -->
    <svg width="130" height="80" viewBox="470 320 130 80" style="left:470px;top:320px">
      <defs><filter id="ps" x="-30%" y="-50%" width="160%" height="220%"><feGaussianBlur stdDeviation="3"/></filter></defs>
      <path d="M478 341l30-9-4 14-14 6z" fill="#8a92a8" opacity=".28" filter="url(#ps)"/>
      <path d="M512.600 338.900C517 339.300 521 340 523.700 341.300c3 1.200 5 2.500 6.100 4.100 1.800 2.600 2 5.600 1 8.100-.8 2.200-2.300 3.800-4 4-2.200.2-3.600-2.200-3.100-5 .5-3 1.900-6 4.100-8.100 2-1.500 5-2 8.100-2.100 3.600-.1 7 .7 10.100 2.100 3.800 1.600 7.300 3.600 10.100 6 2.900 2.600 5.300 5.800 7.100 9.200 1.500 3.400 2.200 7 2.500 11.100" fill="none" stroke="#f7bb62" stroke-width="1" stroke-dasharray="4.200 4.300" stroke-linecap="round"/>
      <path d="M474.700 337.600L502.500 339.500l-7.100 9.900z" fill="#ee4469"/>
      <path d="M503.500 337.700l4.400 8.700-6.800-5.700z" fill="#b72a50"/>
      <path d="M483 337.800l20.500-.6-1.700 4z" fill="#a8244a"/>
      <path d="M474.700 337.900l34.900-9.100-6.100 9.300z" fill="#f5587c"/>
    </svg>

    <!-- composer -->
    <div style="left:220px;top:501px;width:720px;height:1px;background:#e3e9f5"></div>
    <div style="left:220px;top:535px;width:720px;height:1px;background:#e3e9f5"></div>
    <div class="t" style="left:249.500px;top:508.900px;font-size:8px;color:#4189ec">Updated sheet.pdf</div>
    <div style="left:250px;top:520px;width:1px;height:9.600px;background:#cbced6"></div>
    <div style="left:914px;top:540.200px;width:15.200px;height:15.200px;border-radius:3px;background:#2a71de"></div>


    <!-- composer toolbar -->
    <svg width="11" height="11" viewBox="0 0 11 11" style="left:243.900px;top:542.700px" fill="none" stroke="#a9a9a9" stroke-width=".8"><circle cx="5.500" cy="5.500" r="4.700"/><circle cx="3.900" cy="4.300" r=".55" fill="#a9a9a9" stroke="none"/><circle cx="7.100" cy="4.300" r=".55" fill="#a9a9a9" stroke="none"/><path d="M3.300 6.700c1 1.500 3.400 1.500 4.400 0"/></svg>
    <div class="t" style="left:270.800px;top:543px;font-size:10.500px;color:#a9a9a9">B</div>
    <div class="t" style="left:299.800px;top:542.800px;font-size:11.500px;font-style:italic;font-family:'Liberation Serif',serif;color:#a9a9a9">I</div>
    <div class="t" style="left:328.600px;top:543.300px;font-size:9.800px;color:#a9a9a9">U</div><div style="left:328.300px;top:551.300px;width:8px;height:.8px;background:#a9a9a9"></div>
    <div class="t" style="left:361.600px;top:543px;font-size:10.500px;color:#a9a9a9">S</div><div style="left:359.300px;top:547.600px;width:11.400px;height:.8px;background:#a9a9a9"></div>
    <svg width="12" height="12" viewBox="0 0 18 18" style="left:391.600px;top:542px" fill="none" stroke="#b0b0b0" stroke-width="1.150"><rect x="-1.500" y="6.200" width="10" height="5.600" rx="2.800" transform="rotate(38 9 9) translate(1.500 0)"/><rect x="6.500" y="6.200" width="10" height="5.600" rx="2.800" transform="rotate(38 9 9) translate(1.500 0)"/></svg>
    <div class="t" style="left:424.700px;top:543.500px;font-size:10px;font-weight:bold;letter-spacing:.9px;color:#999">&lt;/&gt;</div>
    <svg width="11" height="9" viewBox="0 0 20 14" preserveAspectRatio="none" style="left:463.600px;top:543.600px"><path d="M7.300 2.300h11M7.300 7.200h11M7.300 11.900h11" stroke="#b9b9b9" stroke-width="1.500"/><path d="M1.800 0v5M.5 9h2.600v2H.5v2.600h2.800" stroke="#c9c9c9" stroke-width="1" fill="none"/></svg>
    <svg width="11" height="9" viewBox="0 0 20 14" preserveAspectRatio="none" style="left:495.600px;top:543.600px"><path d="M6 2.300h12.500M6 7.200h12.500M6 11.900h12.500" stroke="#b9b9b9" stroke-width="1.500"/><circle cx="2" cy="2.300" r="1.300" fill="#b9b9b9"/><circle cx="2" cy="7.200" r="1.300" fill="#b9b9b9"/><circle cx="2" cy="11.900" r="1.300" fill="#b9b9b9"/></svg>
    <div class="t" style="left:529.700px;top:543.800px;font-size:9px;color:#a9a9a9;-webkit-text-stroke:.25px #a9a9a9">A</div><div style="left:528.300px;top:550.700px;width:8.900px;height:.8px;background:#a9a9a9"></div>
    <div style="left:555.200px;top:540px;width:17.800px;height:15.400px;border-radius:2px;background:#e5e5e6"></div>
    <svg width="12" height="12" viewBox="-6 -6 12 12" style="left:558px;top:541.800px" fill="none" stroke="#9a9a9a" stroke-width=".8" stroke-linecap="round"><path transform="rotate(33.500) scale(.27)" vector-effect="non-scaling-stroke" d="M-10.650 -5.900V7A9.575 9.575 0 0 0 8.500 7V-9.600A7.175 7.175 0 0 0 -5.850 -9.600V6.800A3.625 3.625 0 0 0 1.400 6.800V-7.600"/></svg>
    <svg width="14" height="14" viewBox="0 0 14 14" style="left:914.600px;top:540.800px" fill="none" stroke="#fff" stroke-width=".8" stroke-linejoin="round"><path d="M4 3.600l7 3.400-7 3.400 1.300-3.400zM5.300 7H11"/></svg>
    <!-- Components panel -->
    <div class="panel" style="left:105.400px;top:228px;width:187.600px;height:256.500px">
      <div class="t" style="left:16.500px;top:17.600px;font-size:19px;letter-spacing:.75px;color:#354055">Components</div>
      <svg width="14" height="9" viewBox="0 0 14 9" style="left:157.600px;top:22.600px"><path d="M1 1l6.200 6.600L12.800 1" fill="none" stroke="#2f3b52" stroke-width="1.300" stroke-linecap="round"/></svg>
      <div class="cb" style="left:21.6px;top:50.4px;"><svg width="21" height="21" viewBox="0 0 21 21" style="left:9.500px;top:9.700px" fill="none" stroke="#666" stroke-width="1.500"><circle cx="10.500" cy="10.500" r="9"/><circle cx="7.300" cy="8" r=".9" fill="#666" stroke="none"/><circle cx="13.700" cy="8" r=".9" fill="#666" stroke="none"/><path d="M6.200 12.600c1.800 3 6.800 3 8.600 0" stroke-linecap="round"/></svg></div>
      <div class="cb" style="left:74.0px;top:50.4px;"><div class="t" style="left:0;top:11px;width:39px;text-align:center;font-size:19px;color:#666">B</div></div>
      <div class="cb" style="left:126.6px;top:50.4px;"><div class="t" style="left:0;top:9px;width:39px;text-align:center;font-size:21px;font-style:italic;font-family:'Liberation Serif',serif;color:#666">I</div></div>
      <div class="cb" style="left:21.6px;top:100.100px;"><div class="t" style="left:0;top:11.300px;width:39px;text-align:center;font-size:17px;color:#666">U</div></div>
      <div class="cb" style="left:74.0px;top:100.100px;"><div class="t" style="left:0;top:10.500px;width:39px;text-align:center;font-size:19px;color:#666">S</div><div style="left:10px;top:18.600px;width:20px;height:1.600px;background:#666"></div></div>
      <div class="cb" style="left:126.6px;top:100.100px;"><svg width="15.600" height="15.600" viewBox="0 0 18 18" style="left:12.500px;top:12.100px" fill="none" stroke="#666" stroke-width="1.750"><rect x="-1.500" y="6.200" width="10" height="5.600" rx="2.800" transform="rotate(38 9 9) translate(1.500 0)"/><rect x="6.500" y="6.200" width="10" height="5.600" rx="2.800" transform="rotate(38 9 9) translate(1.500 0)"/></svg></div>
      <div class="cb" style="left:21.6px;top:150.5px;"><div class="t" style="left:0;top:11.300px;width:39px;text-align:center;font-size:18.500px;font-weight:bold;letter-spacing:1.200px;text-indent:1.200px;color:#555">&lt;/&gt;</div></div>
      <div class="cb" style="left:74.0px;top:150.5px;"><svg width="20" height="14" viewBox="0 0 20 14" style="left:10.500px;top:12.600px"><path d="M7.300 2.300h11M7.300 7.200h11M7.300 11.900h11" stroke="#666" stroke-width="1.250"/><text x=".8" y="5.600" font-family="Liberation Serif,serif" font-size="7.500" font-weight="bold" fill="#666">1</text><text x=".6" y="13.600" font-family="Liberation Serif,serif" font-size="7.500" font-weight="bold" fill="#666">2</text></svg></div>
      <div class="cb" style="left:126.6px;top:150.5px;"><svg width="20" height="14" viewBox="0 0 20 14" style="left:10.300px;top:12.600px"><path d="M6 2.300h11.500M6 7.200h11.500M6 11.900h11.500" stroke="#666" stroke-width="1.250"/><circle cx="2.400" cy="2.300" r="1.100" fill="#666"/><circle cx="2.400" cy="7.200" r="1.100" fill="#666"/><circle cx="2.400" cy="11.900" r="1.100" fill="#666"/></svg></div>
      <div class="cb" style="left:21.6px;top:200.4px;"><div class="t" style="left:0;top:11.800px;width:39px;text-align:center;font-size:13.800px;color:#666;-webkit-text-stroke:.5px #666">A</div><div style="left:12.500px;top:25.500px;width:15px;height:1.500px;background:#666"></div></div>
      <div class="cb" style="left:74.0px;top:200.4px;box-shadow:0 4.500px 6px rgba(0,0,0,.33)"><svg width="20" height="20" viewBox="-10 -10 20 20" style="left:10.400px;top:9.950px" fill="none" stroke="#6a6a6a" stroke-width="1.150" stroke-linecap="round"><path transform="rotate(33.500) scale(0.446)" vector-effect="non-scaling-stroke" d="M-10.650 -5.900V7A9.575 9.575 0 0 0 8.500 7V-9.600A7.175 7.175 0 0 0 -5.850 -9.600V6.800A3.625 3.625 0 0 0 1.400 6.800V-7.600"/></svg></div>
    </div>

    <!-- File sharing panel -->
    <div class="fs" style="left:672px;top:256px;width:245px;height:264.700px">
      <div class="t" style="left:15.500px;top:16.500px;font-size:13px;color:#fff;-webkit-text-stroke:.25px #fff">File Sharing</div>
      <svg width="10" height="7" viewBox="0 0 10 7" style="left:215px;top:21.300px"><path d="M1.500 5.400L5 1.900l3.500 3.500" fill="none" stroke="#fff" stroke-width="1.700" stroke-linecap="round"/></svg>
      <div class="tile" style="left:15.300px;top:46px">
        <svg width="44" height="34" viewBox="0 0 44 34" style="left:27px;top:22.500px" fill="none" stroke="#fff" stroke-width="1.800" stroke-linejoin="round" stroke-linecap="round"><path d="M1.800 29V4.300a2.500 2.500 0 0 1 2.500-2.500h9.400c1.200 0 1.800.5 2.400 1.500l.6 1c.4.700 1 1 2 1h19.700a3.500 3.500 0 0 1 3.500 3.500V28.500a3.500 3.500 0 0 1-3.500 3.500H5.300a3.500 3.500 0 0 1-3.500-3zM1.800 8.500h40.100M18.500 2.600h9"/></svg>
        <div class="lb" style="text-indent:-2.400px">Share Files</div>
      </div>
      <div class="tile" style="left:130.800px;top:46px">
        <svg width="38" height="36" viewBox="0 0 38 36" style="left:31.200px;top:21.400px" fill="none" stroke="#fff" stroke-width="1.800" stroke-linejoin="round" stroke-linecap="round"><rect x="2.200" y="2.200" width="33.600" height="31.600" rx="4.500"/><circle cx="13.200" cy="11" r="3.300"/><path d="M5.400 32l6.800-10.500 3 4.200M15.200 32.500l8.300-16 10.600 15.500"/></svg>
        <div class="lb" style="text-indent:4.600px">Share Pictures</div>
      </div>
      <div class="tile" style="left:15.300px;top:153.400px">
        <svg width="40" height="40" viewBox="0 0 40 40" style="left:28.500px;top:20.200px" fill="none" stroke="#fff" stroke-width="1.800" stroke-linejoin="round"><circle cx="20" cy="20" r="17.600"/><path d="M15 13.500v13l12-6.500z"/></svg>
        <div class="lb">Share videos</div>
      </div>
      <div class="tile" style="left:130.800px;top:153.400px">
        <svg width="40" height="40" viewBox="-20 -20 40 40" style="left:28.900px;top:21px" fill="none" stroke="#fff" stroke-width="2.050" stroke-linecap="round"><path transform="rotate(33.500)" d="M-10.650 -5.900V7A9.575 9.575 0 0 0 8.500 7V-9.600A7.175 7.175 0 0 0 -5.850 -9.600V6.800A3.625 3.625 0 0 0 1.400 6.800V-7.600"/></svg>
        <div class="lb">Attach Files</div>
      </div>
    </div>
  </div>
</div>
</body>
</html>
